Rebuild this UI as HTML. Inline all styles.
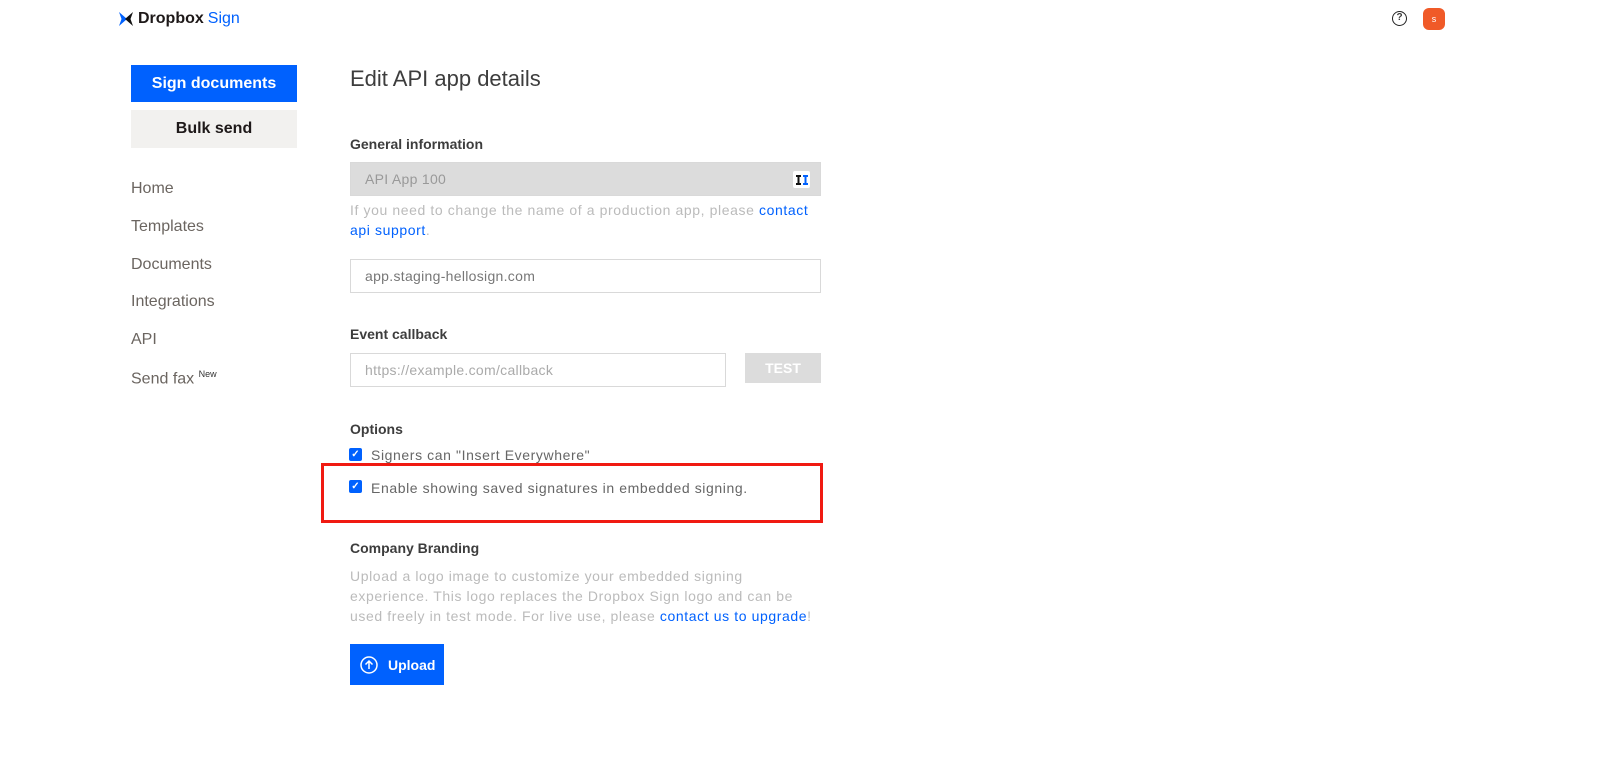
<!DOCTYPE html>
<html><head><style>
*{box-sizing:border-box;margin:0;padding:0}
body{width:1600px;height:764px;background:#fff;font-family:"Liberation Sans",sans-serif;position:relative;overflow:hidden;color:#3d3d3d}
.a{position:absolute}
.lbl{font-size:14px;font-weight:bold;color:#3d3d3d}
.nav{font-size:16px;color:#6b6560;left:131px}
.inp{border:1px solid #d9d9d9;background:#fff;font-size:14px;color:#777;padding-left:14px;display:flex;align-items:center;letter-spacing:.3px}
.help{font-size:14px;color:#bbb;line-height:20px;letter-spacing:.6px}
a{color:#0061fe;text-decoration:none}
.cb{width:13px;height:13px;background:#0061fe;border-radius:2px;color:#fff;font-size:10px;line-height:13px;text-align:center;font-weight:bold}
.opt{font-size:14px;color:#666;letter-spacing:.6px}
</style></head><body>
<div class="a" style="left:118px;top:10px;display:flex;align-items:center">
<svg width="16" height="16" viewBox="0 0 16 16"><path d="M1 1L9 8 1 15 3.5 8z" fill="#0061fe"/><path d="M15 1L7 8 15 15 12.5 8z" fill="#111"/></svg>
<span style="font-size:16px;font-weight:bold;color:#1e1919;margin-left:4px">Dropbox</span><span style="font-size:16px;color:#0061fe;margin-left:4px">Sign</span></div>
<div class="a" style="left:1392px;top:11px;width:15px;height:15px;border:1.5px solid #222;border-radius:50%;font-size:10px;font-weight:bold;text-align:center;line-height:12px">?</div>
<div class="a" style="left:1423px;top:8px;width:22px;height:22px;background:#f05a28;border-radius:6px;color:#fff;font-size:9px;text-align:center;line-height:22px">s</div>

<div class="a" style="left:131px;top:65px;width:166px;height:37px;background:#0061fe;color:#fff;font-size:16px;font-weight:bold;text-align:center;line-height:37px">Sign documents</div>
<div class="a" style="left:131px;top:110px;width:166px;height:38px;background:#f2f1ef;color:#1e1919;font-size:16px;font-weight:bold;text-align:center;line-height:38px">Bulk send</div>
<div class="a nav" style="top:180px">Home</div>
<div class="a nav" style="top:218px">Templates</div>
<div class="a nav" style="top:256px">Documents</div>
<div class="a nav" style="top:293px">Integrations</div>
<div class="a nav" style="top:331px">API</div>
<div class="a nav" style="top:369px">Send fax <sup style="font-size:9px;color:#333">New</sup></div>

<div class="a" style="left:350px;top:66px;font-size:22px;color:#3d3d3d">Edit API app details</div>
<div class="a lbl" style="left:350px;top:136px">General information</div>
<div class="a inp" style="left:350px;top:162px;width:471px;height:34px;background:#dcdcdc;color:#999">API App 100
<span style="position:absolute;right:10px;top:8px;width:17px;height:17px;background:#fff;border-radius:2px;display:flex;align-items:center;justify-content:center">
<svg width="12" height="10" viewBox="0 0 12 10"><path d="M0 0h5v2H3.5v6H5v2H0V8h1.5V2H0z" fill="#111"/><path d="M7 0h5v2h-1.5v6H12v2H7V8h1.5V2H7z" fill="#0061fe"/></svg></span></div>
<div class="a help" style="left:350px;top:200px;width:462px">If you need to change the name of a production app, please <a>contact api support</a>.</div>
<div class="a inp" style="left:350px;top:259px;width:471px;height:34px">app.staging-hellosign.com</div>
<div class="a lbl" style="left:350px;top:326px">Event callback</div>
<div class="a inp" style="left:350px;top:353px;width:376px;height:34px;color:#aaa">https://example.com/callback</div>
<div class="a" style="left:745px;top:353px;width:76px;height:30px;background:#dcdcdc;color:#fff;font-size:14px;font-weight:bold;text-align:center;line-height:30px">TEST</div>
<div class="a lbl" style="left:350px;top:421px">Options</div>
<div class="a cb" style="left:349px;top:448px">✓</div>
<div class="a opt" style="left:371px;top:447px">Signers can "Insert Everywhere"</div>
<div class="a cb" style="left:349px;top:480px">✓</div>
<div class="a opt" style="left:371px;top:480px">Enable showing saved signatures in embedded signing.</div>
<div class="a" style="left:321px;top:463px;width:502px;height:60px;border:3px solid #f01a12"></div>
<div class="a lbl" style="left:350px;top:540px">Company Branding</div>
<div class="a help" style="left:350px;top:566px;width:465px">Upload a logo image to customize your embedded signing experience. This logo replaces the Dropbox Sign logo and can be used freely in test mode. For live use, please <a>contact us to upgrade</a>!</div>
<div class="a" style="left:350px;top:644px;width:94px;height:41px;background:#0061fe;color:#fff;font-size:14px;font-weight:bold;display:flex;align-items:center;padding-left:10px">
<svg width="18" height="18" viewBox="0 0 18 18"><circle cx="9" cy="9" r="8" fill="none" stroke="#fff" stroke-width="1.5"/><path d="M9 13V5M5.5 8.5L9 5l3.5 3.5" fill="none" stroke="#fff" stroke-width="1.5"/></svg>
<span style="margin-left:10px">Upload</span></div>
</body></html>
